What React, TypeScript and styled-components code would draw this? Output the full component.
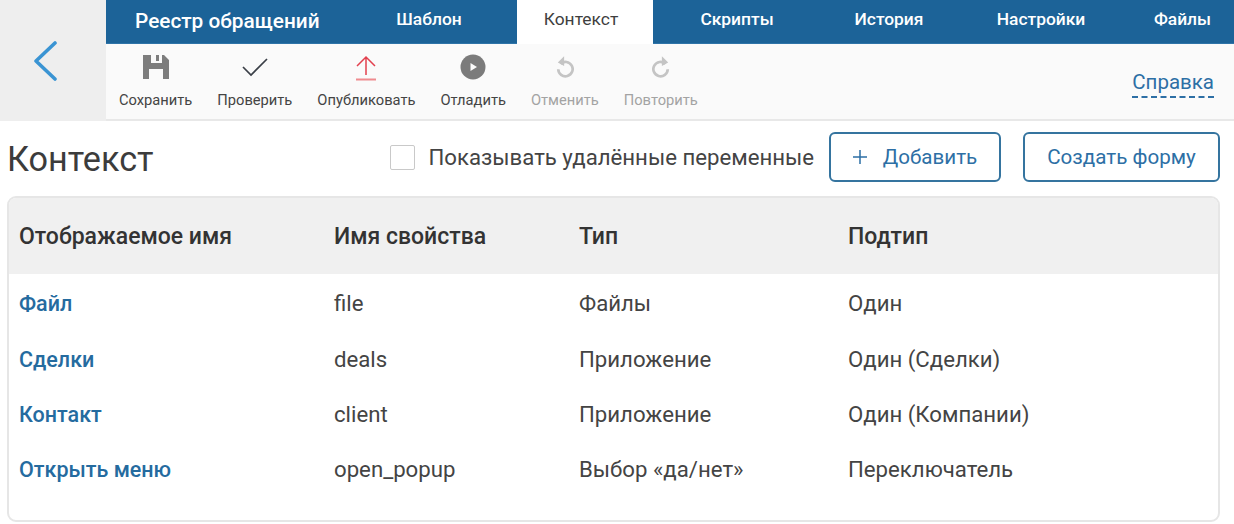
import React from "react";
import styled, { createGlobalStyle } from "styled-components";

const Global = createGlobalStyle`
  html, body { margin: 0; padding: 0; background: #fff; overflow: hidden; }
  body { font-family: Roboto, "Liberation Sans", sans-serif; color: #3c3c3c; }
  * { box-sizing: border-box; }
`;

const Page = styled.div`
  width: 1234px;
  height: 524px;
  display: flex;
  flex-direction: column;
`;

const Top = styled.header`
  display: flex;
  height: 122px;
`;

const BackPanel = styled.div`
  width: 106px;
  background: #eeeeee;
  display: flex;
  padding: 41px 0 0 33px;
`;

const TopMain = styled.div`
  flex: 1;
  display: flex;
  flex-direction: column;
`;

const TabBar = styled.nav`
  height: 44px;
  background: #1c6398;
  display: flex;
  align-items: stretch;
  border-bottom: 1px solid #2f74a8;
`;

const AppTitle = styled.div`
  width: 235px;
  padding-left: 29px;
  font-size: 20.8px;
  font-weight: 500;
  line-height: 42px;
  color: #fff;
  white-space: nowrap;
`;

const Tab = styled.div<{ $w: number; $active?: boolean; $pl?: number; $pr?: number }>`
  width: ${(p) => p.$w}px;
  padding: 0 ${(p) => p.$pr ?? 0}px 0 ${(p) => p.$pl ?? 0}px;
  text-align: center;
  font-size: 17.4px;
  font-weight: ${(p) => (p.$active ? 400 : 500)};
  line-height: 39px;
  color: ${(p) => (p.$active ? "#3f3f3f" : "#fff")};
  background: ${(p) => (p.$active ? "#fff" : "transparent")};
  margin-bottom: ${(p) => (p.$active ? "-1px" : "0")};
  white-space: nowrap;
`;

const Toolbar = styled.div`
  flex: 1;
  background: #fafafa;
  border-bottom: 2px solid #e8e8e8;
  display: flex;
  gap: 25px;
  padding: 0 20px 0 13px;
`;

const Tool = styled.div<{ $disabled?: boolean }>`
  display: flex;
  flex-direction: column;
  align-items: center;
  color: ${(p) => (p.$disabled ? "#a3a3a3" : "#444")};
  font-size: 14.7px;
  line-height: 16px;
  white-space: nowrap;
`;

const ToolIcon = styled.div`
  height: 40px;
  display: flex;
  align-items: center;
  justify-content: center;
  padding-top: 5px;
`;

const ToolLabel = styled.span`
  margin-top: 8px;
`;

const Help = styled.a`
  margin: 26px 0 0 auto;
  height: 28px;
  font-size: 20.5px;
  line-height: 25px;
  color: #2d6fa5;
  border-bottom: 2px dashed #2d6fa5;
`;

const Content = styled.main`
  flex: 1;
  padding: 11px 14px 2px 7px;
  display: flex;
  flex-direction: column;
`;

const HeaderRow = styled.div`
  display: flex;
  align-items: flex-start;
  height: 64px;
`;

const Title = styled.h1`
  margin: 3px auto 0 0;
  font-size: 34.2px;
  font-weight: 400;
  line-height: 48px;
  color: #3c3c3c;
`;

const CheckLabel = styled.label`
  display: flex;
  align-items: center;
  gap: 14px;
  height: 50px;
  margin-right: 15px;
  font-size: 22.2px;
  color: #444;
`;

const CheckBox = styled.span`
  width: 25px;
  height: 25px;
  border: 1px solid #c9c9c9;
  border-radius: 2px;
  background: #fff;
`;

const OutlineButton = styled.button<{ $w: number }>`
  width: ${(p) => p.$w}px;
  height: 50px;
  margin-left: ${(p) => (p.$w > 180 ? "22px" : "0")};
  border: 2px solid #35749f;
  border-radius: 6px;
  background: #fff;
  color: #2d6fa5;
  font-family: inherit;
  font-size: 20.6px;
  display: flex;
  align-items: center;
  justify-content: center;
  gap: 16px;
`;

const Card = styled.section`
  height: 326px;
  border: 2px solid #e6e6e6;
  border-radius: 9px;
  overflow: hidden;
`;

const Row = styled.div<{ $head?: boolean; $h: number }>`
  display: grid;
  grid-template-columns: 315px 245px 269px 1fr;
  align-items: center;
  height: ${(p) => p.$h}px;
  padding-left: 10px;
  background: ${(p) => (p.$head ? "#f0f0f0" : "transparent")};
  font-size: ${(p) => (p.$head ? "23px" : "22.2px")};
  font-weight: ${(p) => (p.$head ? 500 : 400)};
  color: ${(p) => (p.$head ? "#333" : "#444")};
`;

const LinkCell = styled.a`
  color: #256b9f;
  font-weight: 500;
  font-size: 21.5px;
  padding-top: 1px;
`;

const tabs = [
  { label: "Шаблон", w: 176 },
  { label: "Контекст", w: 136, active: true, pr: 8 },
  { label: "Скрипты", w: 168 },
  { label: "История", w: 136 },
  { label: "Настройки", w: 168 },
  { label: "Файлы", w: 107, pl: 8 },
];

const SaveIcon = () => (
  <svg width="28" height="28" viewBox="0 0 28 28">
    <path fill="#7d7d7d" fillRule="evenodd" d="M1 2h21l5 5v19H1zM9 2v8h11V2h-3v6h-3V2zM7 16v10h14V16z" />
  </svg>
);
const CheckIcon = () => (
  <svg width="28" height="28" viewBox="0 0 28 28">
    <path fill="none" stroke="#3a3f47" strokeWidth="1.7" d="M2 14l8 8L26 6" />
  </svg>
);
const PublishIcon = () => (
  <svg width="26" height="28" viewBox="0 0 26 28">
    <path fill="none" stroke="#e2404e" strokeWidth="1.5" d="M13 22V4M4 13l9-9 9 9" />
    <path stroke="#ef8b8f" strokeWidth="2" d="M3 26.5h20" />
  </svg>
);
const PlayIcon = () => (
  <svg width="26" height="26" viewBox="0 0 26 26">
    <circle cx="13" cy="13" r="12.5" fill="#7b7b7b" />
    <path fill="#fafafa" d="M10.5 9l6.5 4-6.500 4z" />
  </svg>
);
const UndoIcon = ({ flip }: { flip?: boolean }) => (
  <svg width="18" height="24" viewBox="0 0 20 26" style={flip ? { transform: "scaleX(-1)" } : undefined}>
    <path fill="none" stroke="#c4c4c4" strokeWidth="3" d="M5 9.5a8 8 0 1 1 -2.5 6" />
    <path fill="#c4c4c4" d="M9 1v11L2 8z" />
  </svg>
);

const tools = [
  { label: "Сохранить", icon: <SaveIcon /> },
  { label: "Проверить", icon: <CheckIcon /> },
  { label: "Опубликовать", icon: <PublishIcon /> },
  { label: "Отладить", icon: <PlayIcon /> },
  { label: "Отменить", icon: <UndoIcon />, disabled: true },
  { label: "Повторить", icon: <UndoIcon flip />, disabled: true },
];

const rows = [
  { h: 57, name: "Файл", prop: "file", type: "Файлы", sub: "Один" },
  { h: 55, name: "Сделки", prop: "deals", type: "Приложение", sub: "Один (Сделки)" },
  { h: 55, name: "Контакт", prop: "client", type: "Приложение", sub: "Один (Компании)" },
  { h: 55, name: "Открыть меню", prop: "open_popup", type: "Выбор «да/нет»", sub: "Переключатель" },
];

export default function App() {
  return (
    <Page>
      <Global />
      <Top>
        <BackPanel>
          <svg width="26" height="40" viewBox="0 0 26 40">
            <path fill="none" stroke="#3a94d3" strokeWidth="3.6" strokeLinecap="round" strokeLinejoin="round" d="M22 2L3 20l19 18" />
          </svg>
        </BackPanel>
        <TopMain>
          <TabBar>
            <AppTitle>Реестр обращений</AppTitle>
            {tabs.map((t) => (
              <Tab key={t.label} $w={t.w} $active={t.active} $pl={t.pl} $pr={t.pr}>
                {t.label}
              </Tab>
            ))}
          </TabBar>
          <Toolbar>
            {tools.map((t) => (
              <Tool key={t.label} $disabled={t.disabled}>
                <ToolIcon>{t.icon}</ToolIcon>
                <ToolLabel>{t.label}</ToolLabel>
              </Tool>
            ))}
            <Help>Справка</Help>
          </Toolbar>
        </TopMain>
      </Top>
      <Content>
        <HeaderRow>
          <Title>Контекст</Title>
          <CheckLabel>
            <CheckBox />
            Показывать удалённые переменные
          </CheckLabel>
          <OutlineButton $w={172}>
            <svg width="14" height="14" viewBox="0 0 14 14">
              <path stroke="#2d6fa5" strokeWidth="1.5" d="M7 0v14M0 7h14" />
            </svg>
            Добавить
          </OutlineButton>
          <OutlineButton $w={197}>Создать форму</OutlineButton>
        </HeaderRow>
        <Card>
          <Row $head $h={76}>
            <span>Отображаемое имя</span>
            <span>Имя свойства</span>
            <span>Тип</span>
            <span>Подтип</span>
          </Row>
          {rows.map((r) => (
            <Row key={r.prop} $h={r.h}>
              <LinkCell>{r.name}</LinkCell>
              <span>{r.prop}</span>
              <span>{r.type}</span>
              <span>{r.sub}</span>
            </Row>
          ))}
        </Card>
      </Content>
    </Page>
  );
}
